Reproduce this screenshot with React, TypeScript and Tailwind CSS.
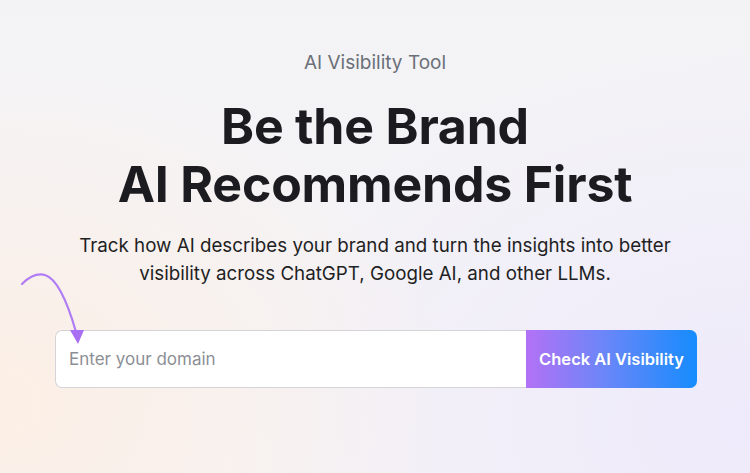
import { useState } from "react";

const Arrow = () => (
	<svg
		className="absolute left-0 top-0 pointer-events-none"
		width="100"
		height="100"
		viewBox="0 0 100 100"
		fill="none"
	>
		{/* curve from left, up and then down onto the input */}
		<path
			d="M22 14 C 29 7, 37 3, 45 5 C 58 9, 68 34, 76 62"
			stroke="#b07cf6"
			strokeWidth="2.2"
			strokeLinecap="round"
			fill="none"
		/>
		<path d="M70 60 L84 60 L78 74 Z" fill="#a86ff4" />
	</svg>
);

const App = () => {
	const [domain, setDomain] = useState<string>("");

	return (
		<div
			className="relative w-full h-[473px] overflow-hidden bg-[#f4f4f7] bg-[radial-gradient(ellipse_60%_75%_at_0%_85%,#fcefe5_0%,rgba(252,239,229,0)_100%),radial-gradient(ellipse_70%_80%_at_100%_90%,#eeeafb_0%,rgba(238,234,251,0)_100%),linear-gradient(180deg,#f3f3f6_0%,#f5f3f6_100%)]"
			style={{ fontFamily: "Inter, 'Noto Sans', sans-serif" }}
		>
			<div className="flex flex-col items-center pt-[51px]">
				<p className="text-[19px] leading-6 text-[#6b6f78]">AI Visibility Tool</p>
				<h1 className="mt-[22px] text-center text-[50px] leading-[58px] font-bold text-[#1b1b20] tracking-[-0.2px]">
					Be the Brand
					<br />
					AI Recommends First
				</h1>
				<p className="mt-[19px] max-w-[640px] text-center text-[18.75px] leading-[28px] text-[#1f1f24]">
					Track how AI describes your brand and turn the insights into better
					visibility across ChatGPT, Google AI, and other LLMs.
				</p>
			</div>

			<div className="relative mx-[53px] mt-[42px]">
				<div className="absolute -left-[53px] -top-[60px]">
					<Arrow />
				</div>
				<form
					className="flex h-[58px] ml-[2px]"
					onSubmit={(e) => e.preventDefault()}
				>
					<input
						type="text"
						value={domain}
						onChange={(e) => setDomain(e.target.value)}
						placeholder="Enter your domain"
						className="flex-1 min-w-0 h-full rounded-l-[7px] border border-r-0 border-[#d4d4d8] bg-white px-[13px] text-[17px] text-[#1f1f24] placeholder:text-[#8c8f96] outline-none"
					/>
					<button
						type="submit"
						className="h-full w-[171px] rounded-r-[7px] bg-[linear-gradient(90deg,#b371f5_0%,#6c86f8_45%,#168cfd_100%)] text-[16.5px] font-semibold text-white"
					>
						Check AI Visibility
					</button>
				</form>
			</div>
		</div>
	);
};

export default App;
